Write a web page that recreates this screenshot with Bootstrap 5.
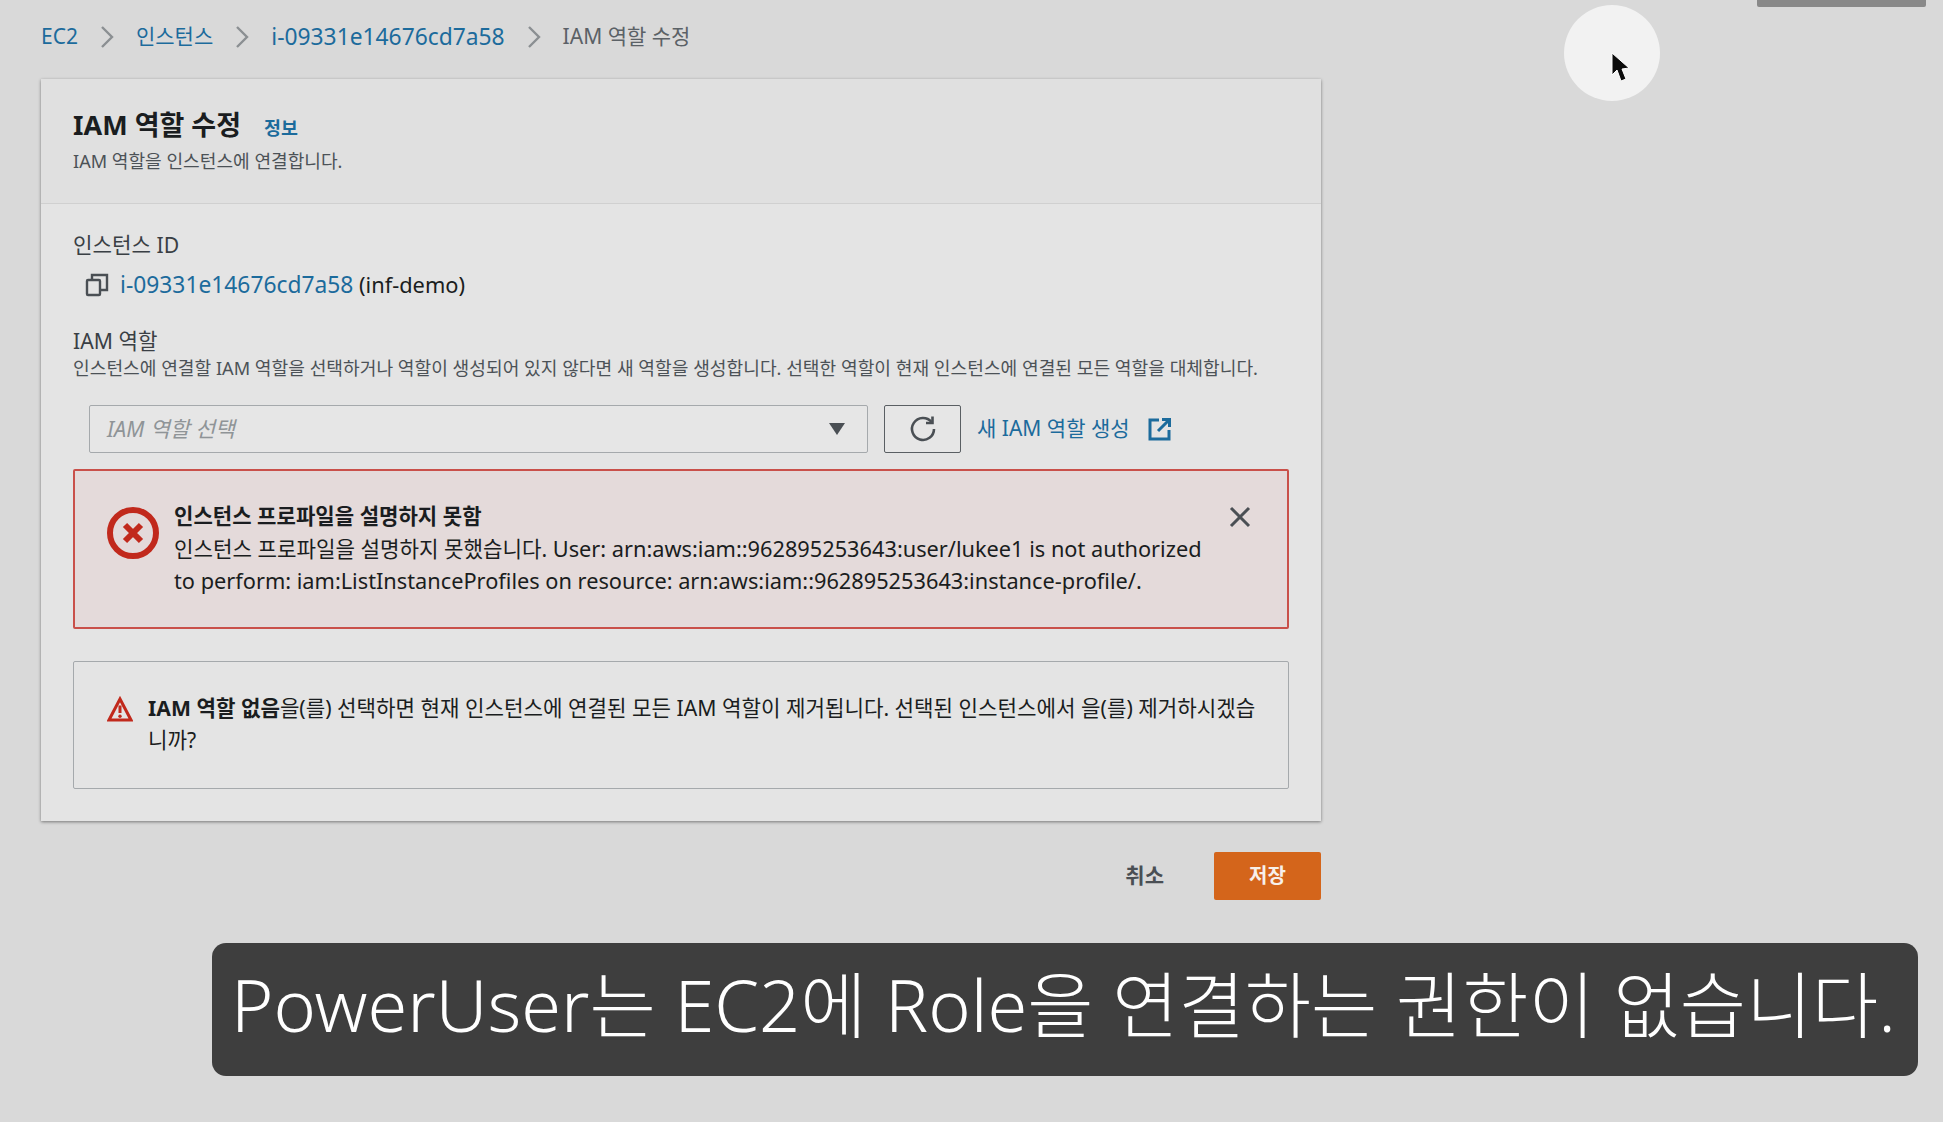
<!DOCTYPE html>
<html lang="ko">
<head>
    <meta charset="UTF-8">
    <title>IAM 역할 수정</title>
    <link href="https://cdn.jsdelivr.net/npm/bootstrap@5.3.3/dist/css/bootstrap.min.css" rel="stylesheet">
    <style>
        html, body {
            height: 100%;
        }

        body {
            background: #d9d9d9;
            color: #1a1d20;
            font-family: "Noto Sans", "Noto Sans CJK KR", sans-serif;
            font-size: 21px;
            overflow: hidden;
        }

        a {
            color: #1c6b9c;
            text-decoration: none;
        }

        .page-wrap {
            padding: 19px 25px 0 41px;
        }

        .crumbs {
            height: 36px;
            gap: 22px;
            font-size: 21px;
            color: #5b6166;
        }

        .crumb-sep {
            width: 14px;
            height: 24px;
        }

        .id-text {
            font-size: 22.8px;
        }

        .panel-main {
            width: 1280px;
            margin-top: 24px;
            background: #e4e4e4;
            box-shadow: 0 1px 3px rgba(0, 0, 0, .45);
        }

        .panel-head {
            height: 125px;
            padding: 28px 32px 0;
            background: #e0e0e0;
            border-bottom: 1px solid #d0d0d0;
        }

        .panel-title {
            font-size: 27px;
            font-weight: 700;
            margin: 0;
            line-height: 36px;
        }

        .info-link {
            font-size: 18.4px;
            font-weight: 600;
            margin: 6px 0 0 23px;
        }

        .panel-sub {
            font-size: 18.1px;
            color: #4c5257;
            line-height: 26px;
            margin-top: 5px;
        }

        .panel-body-wrap {
            padding: 27px 32px 32px;
        }

        .field-label {
            font-size: 21.2px;
            line-height: 28px;
            color: #3a3f44;
        }

        .id-row {
            margin-top: 10px;
            padding-left: 12px;
            font-size: 21.8px;
            line-height: 32px;
            gap: 11px;
        }

        .role-label {
            margin-top: 26px;
        }

        .role-help {
            font-size: 18.15px;
            line-height: 26px;
            color: #4c5257;
            white-space: nowrap;
        }

        .role-row {
            margin-top: 24px;
            padding-left: 16px;
            gap: 16px;
        }

        .role-select {
            width: 779px;
            height: 48px;
            padding: 0 21px 0 17px;
            border: 1px solid #a5a9ac;
            border-radius: 2px;
            background: #e6e6e6;
            color: #8f9497;
            font-size: 21.6px;
            font-style: italic;
        }

        .select-arrow {
            width: 18px;
            height: 14px;
        }

        .refresh-btn {
            width: 77px;
            height: 48px;
            padding: 0;
            border: 1px solid #5a5f63;
            border-radius: 2px;
            background: #e6e6e6;
        }

        .new-role-link {
            gap: 18px;
        }

        .flash-error {
            margin-top: 16px;
            height: 160px;
            padding: 30px 30px 0 32px;
            background: #e4dada;
            border: 2px solid #c9504a;
            border-radius: 2px;
            gap: 15px;
        }

        .flash-title {
            font-weight: 700;
            font-size: 21.1px;
            line-height: 30px;
        }

        .flash-text {
            font-size: 21.75px;
            line-height: 32px;
            margin-top: 2px;
            white-space: nowrap;
        }

        .flash-ko {
            font-size: 21.2px;
        }

        .error-icon {
            margin-top: 6px;
        }

        .flash-close {
            width: 22px;
            height: 22px;
            padding: 0;
            margin: -1px 6px 0 auto;
            border: 0;
            background: none;
        }

        .flash-warn {
            margin-top: 32px;
            height: 128px;
            padding: 30px 24px 0 33px;
            border: 1px solid #a5a9ac;
            border-radius: 2px;
            gap: 15px;
            font-size: 21.2px;
            line-height: 32px;
            word-break: break-all;
        }

        .warn-icon {
            margin-top: 4px;
        }

        .action-row {
            width: 1280px;
            margin-top: 31px;
            gap: 50px;
        }

        .cancel-label {
            font-weight: 600;
            color: #4a4f54;
        }

        .save-btn {
            width: 107px;
            height: 48px;
            padding: 0;
            border: 0;
            border-radius: 2px;
            background: #d4651b;
            color: #f7f0ea;
            font-size: 20px;
            font-weight: 600;
        }

        .caption-row {
            margin-top: 43px;
        }

        .caption-box {
            width: 1706px;
            height: 133px;
            padding: 0 0 11px 19px;
            background: #3e3e3e;
            border-radius: 14px;
            color: #fff;
            font-size: 72px;
            font-weight: 300;
            white-space: nowrap;
        }

        .cursor-spot {
            position: absolute;
            left: 1564px;
            top: 5px;
            width: 96px;
            height: 96px;
            border-radius: 50%;
            background: #f2f2f2;
        }

        .cursor-arrow {
            position: absolute;
            left: 47px;
            top: 47px;
            width: 20px;
            height: 32px;
        }

        .top-tab {
            position: absolute;
            left: 1757px;
            top: 0;
            width: 169px;
            height: 7px;
            background: #898989;
            border-radius: 0 0 2px 2px;
        }
    </style>
</head>
<body>
    <div class="top-tab"></div>
    <div class="cursor-spot">
        <svg class="cursor-arrow" viewBox="0 0 20 32"><path d="M1 1 L1 23 L6 18 L10 29 L15 27 L11 17 L18 16 Z" fill="#0b0b0b" stroke="#fff" stroke-width="1"/></svg>
    </div>

    <div class="page-wrap">
        <!-- Breadcrumb -->
        <div class="crumbs d-flex align-items-center">
            <a href="#">EC2</a>
            <svg class="crumb-sep" viewBox="0 0 14 24"><path d="M2 2 L12 12 L2 22" fill="none" stroke="#8b8f92" stroke-width="2.4"/></svg>
            <a href="#">인스턴스</a>
            <svg class="crumb-sep" viewBox="0 0 14 24"><path d="M2 2 L12 12 L2 22" fill="none" stroke="#8b8f92" stroke-width="2.4"/></svg>
            <a class="id-text" href="#">i-09331e14676cd7a58</a>
            <svg class="crumb-sep" viewBox="0 0 14 24"><path d="M2 2 L12 12 L2 22" fill="none" stroke="#8b8f92" stroke-width="2.4"/></svg>
            <span>IAM 역할 수정</span>
        </div>

        <!-- Main panel -->
        <div class="panel-main">
            <div class="panel-head">
                <div class="d-flex align-items-center">
                    <h1 class="panel-title">IAM 역할 수정</h1>
                    <a class="info-link" href="#">정보</a>
                </div>
                <div class="panel-sub">IAM 역할을 인스턴스에 연결합니다.</div>
            </div>

            <div class="panel-body-wrap">
                <div class="field-label">인스턴스 ID</div>
                <div class="id-row d-flex align-items-center">
                    <svg width="24" height="24" viewBox="0 0 24 24" fill="none" stroke="#4a4f54" stroke-width="2.4"><rect x="2" y="7" width="13" height="15" rx="1"/><path d="M7 7 V2 H22 V17 H15"/></svg>
                    <span><a class="id-text" href="#">i-09331e14676cd7a58</a> (inf-demo)</span>
                </div>

                <div class="field-label role-label">IAM 역할</div>
                <div class="role-help">인스턴스에 연결할 IAM 역할을 선택하거나 역할이 생성되어 있지 않다면 새 역할을 생성합니다. 선택한 역할이 현재 인스턴스에 연결된 모든 역할을 대체합니다.</div>

                <div class="role-row d-flex align-items-center">
                    <div class="role-select d-flex align-items-center justify-content-between">
                        <span>IAM 역할 선택</span>
                        <svg class="select-arrow" viewBox="0 0 18 14"><path d="M1 1 H17 L9 13 Z" fill="#4a4f54"/></svg>
                    </div>
                    <button class="refresh-btn btn d-flex align-items-center justify-content-center" type="button">
                        <svg width="28" height="28" viewBox="0 0 28 28" fill="none" stroke="#4a4f54" stroke-width="2.6"><path d="M22.5 7 A11 11 0 1 0 25 14"/><path d="M23.5 1.5 V8 H17"/></svg>
                    </button>
                    <a class="new-role-link d-flex align-items-center" href="#">
                        <span>새 IAM 역할 생성</span>
                        <svg width="24" height="24" viewBox="0 0 24 24" fill="none" stroke="#1c6b9c" stroke-width="3"><path d="M11 3 H2 V22 H21 V13"/><path d="M10 14 L21 3"/><path d="M14 2.5 H21.5 V10"/></svg>
                    </a>
                </div>

                <div class="flash-error d-flex">
                    <svg class="error-icon flex-shrink-0" width="52" height="52" viewBox="0 0 52 52"><circle cx="26" cy="26" r="23" fill="none" stroke="#c1291c" stroke-width="6"/><path d="M18 18 L34 34 M34 18 L18 34" stroke="#c1291c" stroke-width="6"/></svg>
                    <div>
                        <div class="flash-title">인스턴스 프로파일을 설명하지 못함</div>
                        <div class="flash-text"><span class="flash-ko">인스턴스 프로파일을 설명하지 못했습니다.</span> User: arn:aws:iam::962895253643:user/lukee1 is not authorized<br>to perform: iam:ListInstanceProfiles on resource: arn:aws:iam::962895253643:instance-profile/.</div>
                    </div>
                    <button class="flash-close flex-shrink-0" type="button" aria-label="닫기">
                        <svg width="22" height="22" viewBox="0 0 22 22"><path d="M2 2 L20 20 M20 2 L2 20" stroke="#4a4f54" stroke-width="3"/></svg>
                    </button>
                </div>

                <div class="flash-warn d-flex">
                    <svg class="warn-icon flex-shrink-0" width="26" height="26" viewBox="0 0 26 26"><path d="M13 3 L24 24 H2 Z" fill="none" stroke="#c1291c" stroke-width="3"/><path d="M13 9.5 V17" stroke="#c1291c" stroke-width="3"/><circle cx="13" cy="20.2" r="1.7" fill="#c1291c"/></svg>
                    <div><strong>IAM 역할 없음</strong>을(를) 선택하면 현재 인스턴스에 연결된 모든 IAM 역할이 제거됩니다. 선택된 인스턴스에서 을(를) 제거하시겠습니까?</div>
                </div>
            </div>
        </div>

        <div class="action-row d-flex justify-content-end align-items-center">
            <span class="cancel-label">취소</span>
            <button class="save-btn btn" type="button">저장</button>
        </div>

        <div class="caption-row d-flex justify-content-end">
            <div class="caption-box d-flex align-items-center">PowerUser는 EC2에 Role을 연결하는 권한이 없습니다.</div>
        </div>
    </div>
</body>
</html>
